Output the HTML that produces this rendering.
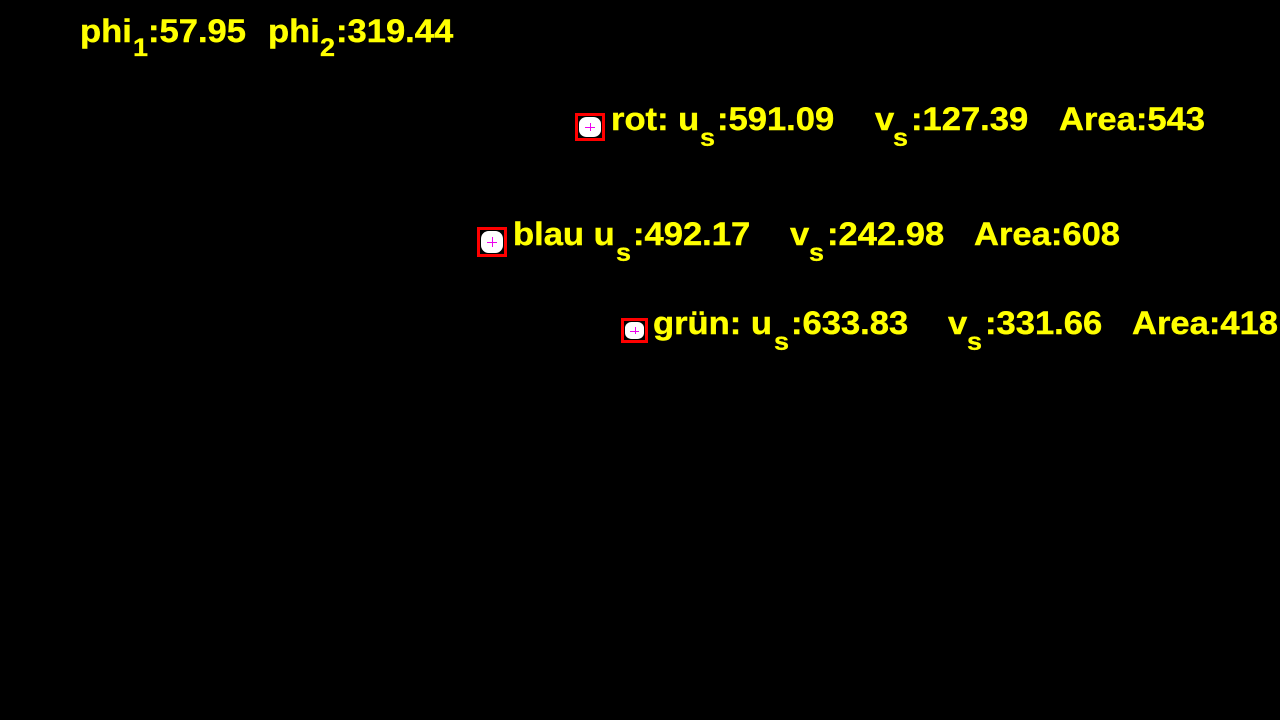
<!DOCTYPE html>
<html><head><meta charset="utf-8"><style>
body{margin:0;width:1280px;height:720px;background:#000;position:relative;overflow:hidden;font-family:"Liberation Sans",sans-serif;font-weight:bold;color:#ffff00}
.t{position:absolute;font-size:32px;line-height:32px;white-space:pre;transform:scaleX(1.08);transform-origin:0 0;-webkit-text-stroke:0.4px #ffff00;margin-top:1px}
.s{position:absolute;font-size:25px;line-height:24px;transform:scaleX(1.08);transform-origin:0 0;-webkit-text-stroke:0.3px #ffff00}
.b{position:absolute;box-sizing:border-box;border:3px solid #f00;background:#000}
.b i{position:absolute;left:1px;top:1px;right:1px;bottom:1px;background:#fff;border-radius:35%}
.b i:before{content:"";position:absolute;left:50%;top:28%;height:44%;width:1px;background:#e0e}
.b i:after{content:"";position:absolute;top:50%;left:28%;width:44%;height:1px;background:#e0e}
</style></head><body>
<div class="t" style="left:80px;top:14px">phi</div><div class="s" style="left:133px;top:36px">1</div><div class="t" style="left:148px;top:14px">:57.95</div>
<div class="t" style="left:268px;top:14px">phi</div><div class="s" style="left:320px;top:36px">2</div><div class="t" style="left:336px;top:14px">:319.44</div>

<div class="b" style="left:575px;top:113px;width:30px;height:28px"><i></i></div>
<div class="t" style="left:611px;top:102px">rot: u</div><div class="s" style="left:700px;top:126px">s</div><div class="t" style="left:717px;top:102px">:591.09</div>
<div class="t" style="left:875px;top:102px">v</div><div class="s" style="left:893px;top:126px">s</div><div class="t" style="left:911px;top:102px">:127.39</div>
<div class="t" style="left:1059px;top:102px">Area:543</div>

<div class="b" style="left:477px;top:227px;width:30px;height:30px"><i></i></div>
<div class="t" style="left:513px;top:217px">blau u</div><div class="s" style="left:616px;top:241px">s</div><div class="t" style="left:633px;top:217px">:492.17</div>
<div class="t" style="left:790px;top:217px">v</div><div class="s" style="left:809px;top:241px">s</div><div class="t" style="left:827px;top:217px">:242.98</div>
<div class="t" style="left:974px;top:217px">Area:608</div>

<div class="b" style="left:621px;top:318px;width:27px;height:25px"><i></i></div>
<div class="t" style="left:653px;top:306px">grün: u</div><div class="s" style="left:774px;top:330px">s</div><div class="t" style="left:791px;top:306px">:633.83</div>
<div class="t" style="left:948px;top:306px">v</div><div class="s" style="left:967px;top:330px">s</div><div class="t" style="left:985px;top:306px">:331.66</div>
<div class="t" style="left:1132px;top:306px">Area:418</div>
</body></html>
